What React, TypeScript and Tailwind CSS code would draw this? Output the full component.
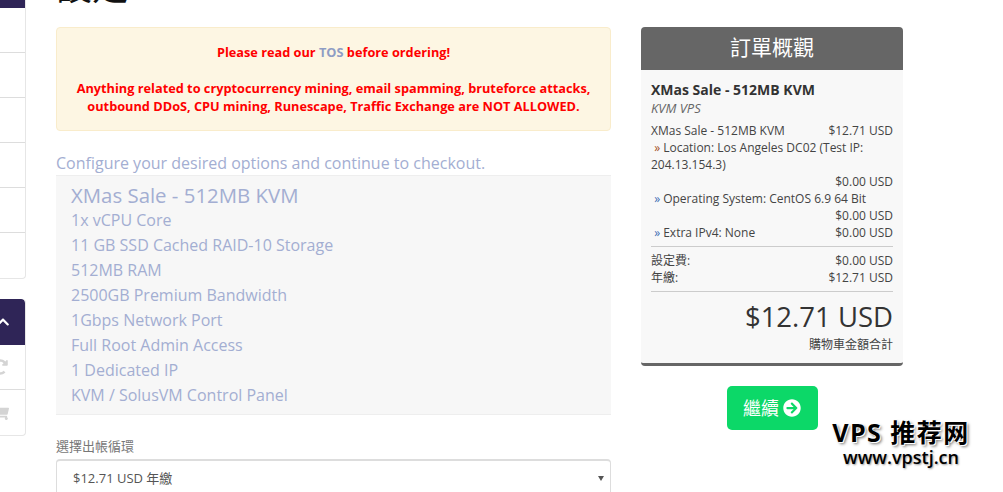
import type { ReactNode } from 'react'
import { FaArrowCircleRight, FaChevronUp, FaRedoAlt, FaShoppingCart } from 'react-icons/fa'

const font = { fontFamily: '"Open Sans", "Noto Sans CJK TC", sans-serif' }

const features = [
  '1x vCPU Core',
  '11 GB SSD Cached RAID-10 Storage',
  '512MB RAM',
  '2500GB Premium Bandwidth',
  '1Gbps Network Port',
  'Full Root Admin Access',
  '1 Dedicated IP',
  'KVM / SolusVM Control Panel',
]

function Sidebar() {
  return (
    <div className="w-[26px] shrink-0 flex flex-col">
      <div className="h-[279px] rounded-br-[4px] border-r border-b border-[#e6e6e6] flex flex-col">
        <div className="h-[8px] bg-[#2f2557]" />
        <div className="h-[45px] border-b border-[#dddddd]" />
        <div className="h-[45px] border-b border-[#dddddd]" />
        <div className="h-[45px] border-b border-[#dddddd]" />
        <div className="h-[45px] border-b border-[#dddddd]" />
        <div className="h-[45px] border-b border-[#dddddd]" />
      </div>
      <div className="mt-[20px] h-[137px] rounded-r-[4px] border-r border-b border-[#e6e6e6] flex flex-col overflow-hidden">
        <div className="h-[46px] shrink-0 bg-[#2f2557] rounded-tr-[4px] flex items-center justify-end pr-[15px] text-white">
          <FaChevronUp size={14} className="shrink-0" />
        </div>
        <div className="h-[45px] shrink-0 border-b border-[#dddddd] flex items-center justify-end pr-[17px] text-[#d4d4d4]">
          <FaRedoAlt size={16} className="shrink-0" />
        </div>
        <div className="flex-1 flex items-center justify-end pr-[16px] text-[#d4d4d4]">
          <FaShoppingCart size={16} className="shrink-0" />
        </div>
      </div>
    </div>
  )
}

function Row({ left, right }: { left?: ReactNode; right: string }) {
  return (
    <div className="flex justify-between h-[17px]">
      <span>{left}</span>
      <span>{right}</span>
    </div>
  )
}

function Summary() {
  return (
    <div className="w-[262px] mt-[27px]">
      <div className="h-[43px] bg-[#666666] rounded-t-[4px] text-white text-center text-[21px] leading-[41px]">
        訂單概觀
      </div>
      <div className="bg-[#f8f8f8] rounded-b-[4px] border-b-[3px] border-[#666666] px-[10px] pt-[10px] pb-[9px] text-[12px] leading-[17px] text-[#444444]">
        <div className="text-[14px] font-bold leading-[20px] text-[#333333]">XMas Sale - 512MB KVM</div>
        <div className="italic text-[13px] text-[#666666] leading-[17px] mb-[5px]">KVM VPS</div>
        <Row left="XMas Sale - 512MB KVM" right="$12.71 USD" />
        <div>&nbsp;<span className="text-[#a5501e]">»</span> Location: Los Angeles DC02 (Test IP: 204.13.154.3)</div>
        <Row right="$0.00 USD" />
        <div>&nbsp;<span className="text-[#3f6fb5]">»</span> Operating System: CentOS 6.9 64 Bit</div>
        <Row right="$0.00 USD" />
        <Row left={<>&nbsp;<span className="text-[#3f6fb5]">»</span> Extra IPv4: None</>} right="$0.00 USD" />
        <div className="border-t border-[#cccccc] mt-[5px] pt-[5px]">
          <Row left="設定費:" right="$0.00 USD" />
          <Row left="年繳:" right="$12.71 USD" />
        </div>
        <div className="border-t border-[#cccccc] mt-[5px] pt-[7px] text-right">
          <div className="text-[27.5px] leading-[36px] text-[#333333]">$12.71 USD</div>
          <div className="mt-[1px] leading-[18px]">購物車金額合計</div>
        </div>
      </div>
      <div className="flex justify-center mt-[20px]">
        <button className="h-[44px] w-[91px] rounded-[5px] bg-[#0cd868] text-white text-[18px] flex items-center justify-center gap-[4px]">
          繼續
          <FaArrowCircleRight size={18} />
        </button>
      </div>
    </div>
  )
}

export default function App() {
  return (
    <div className="relative w-[1003px] h-[492px] overflow-hidden bg-white flex text-[#333333]" style={font}>
      <Sidebar />
      <div className="w-[585px] shrink-0 ml-[30px] pr-[30px] -mt-[23px]">
        <h1 className="text-[36px] leading-[20px] h-[20px] text-[#111111]">設定</h1>
        <div className="mt-[30px] h-[104px] rounded-[4px] border border-[#f9eccb] bg-[#fdf6e3] text-center text-[12.75px] font-bold leading-[18px] text-[#ff0000] pt-[15px] px-[10px]">
          <div>
            Please read our <span className="text-[#8f9dc4]">TOS</span> before ordering!
          </div>
          <div className="mt-[18px]">
            Anything related to cryptocurrency mining, email spamming, bruteforce attacks, outbound DDoS, CPU mining,
            Runescape, Traffic Exchange are NOT ALLOWED.
          </div>
        </div>
        <p className="mt-[21px] mb-[1px] text-[16px] leading-[22px] text-[#a3aed2]">
          Configure your desired options and continue to checkout.
        </p>
        <div className="h-[240px] bg-[#f7f7f7] border-y border-[#eeeeee] px-[15px] pt-[6px] text-[16px] leading-[25px] text-[#a3aed2]">
          <div className="text-[20.4px] leading-[26px]">XMas Sale - 512MB KVM</div>
          {features.map((f) => (
            <div key={f}>{f}</div>
          ))}
        </div>
        <label className="block mt-[21px] text-[13px] leading-[20px] text-[#777777]">選擇出帳循環</label>
        <div className="mt-[3px] h-[38px] rounded-[4px] border border-[#dddddd] border-t-2 flex items-center justify-between pl-[16px] pr-[6px] text-[13px] text-[#555555]">
          <span>$12.71 USD 年繳</span>
          <span className="w-0 h-0 border-x-[3px] border-x-transparent border-t-[5px] border-t-[#555555]" />
        </div>
      </div>
      <Summary />
      {/* watermark sits on top of the page */}
      <div className="absolute left-[826px] top-[419px] w-[150px] text-center text-black">
        <div className="text-[25px] leading-[27px] font-bold tracking-[1.5px] [text-shadow:1px_1px_0_#fff,-1px_-1px_0_#fff,2px_2px_3px_#777]">
          VPS 推荐网
        </div>
        <div className="text-[18px] leading-[22px] font-semibold [text-shadow:1px_1px_2px_#999]">www.vpstj.cn</div>
      </div>
    </div>
  )
}
